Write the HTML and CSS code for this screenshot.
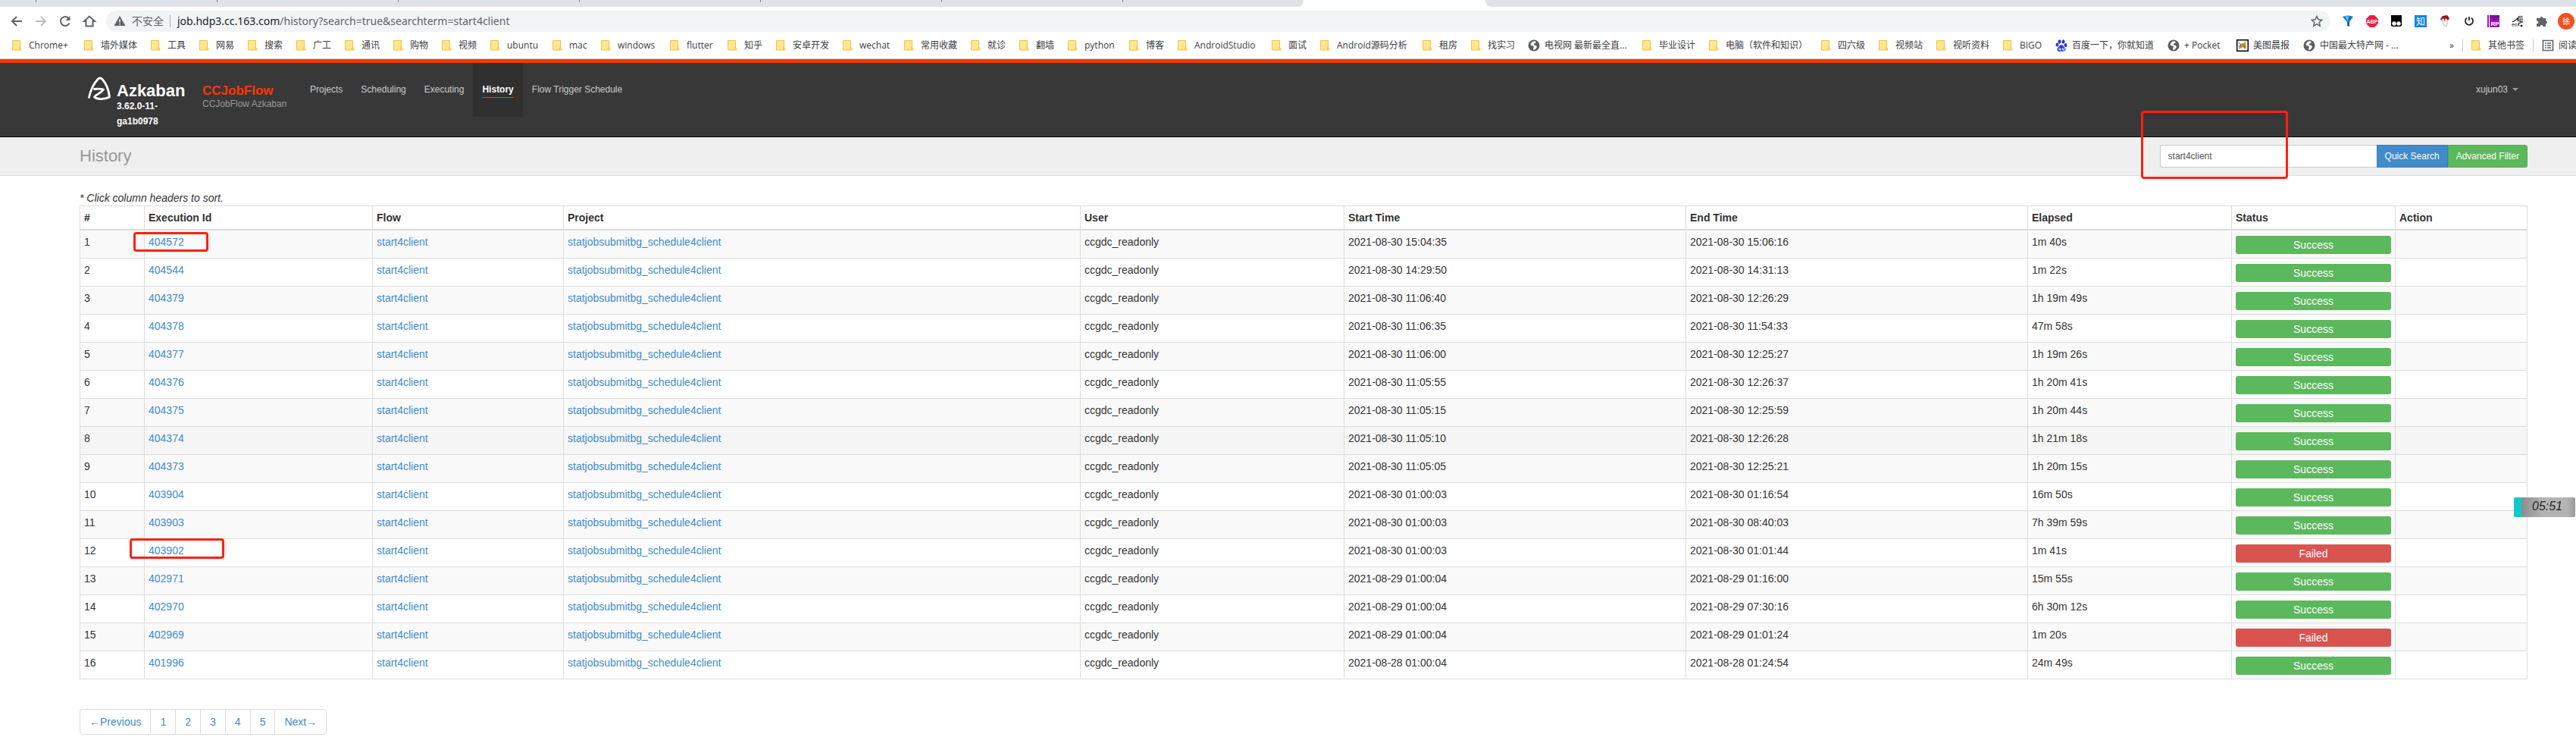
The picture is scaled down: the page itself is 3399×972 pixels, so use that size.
FILE: index.html
```html
<!DOCTYPE html>
<html lang="zh">
<head>
<meta charset="utf-8">
<title>Azkaban - History</title>
<link rel="stylesheet" href="styles.css">
</head>
<body>
<svg width="0" height="0" class="defs" aria-hidden="true">
  <symbol id="folder" viewBox="0 0 16 16"><path d="M.5 1.500h10v9.500q1.500 0 1.500 3h-11.500z" fill="#ffe694" stroke="#e8c53f"/><path d="M9.500 14v-3l1-1" fill="none" stroke="#e8c53f"/></symbol>
  <symbol id="globe" viewBox="0 0 16 16"><circle cx="8" cy="8" r="7.500" fill="#5a5d61"/><path d="M9 2L6 3 3.500 6l.5 2 3 .5 1 1.500-1 1.500.5 2.500 2.500-1 2-3-1-2-2.500-.5-1-1.500 2-1 1.500-1z" fill="#fff"/></symbol>
</svg>
<div class="tabs" aria-hidden="true">
  <div class="inactive left"><i></i><i></i><i></i><i></i><i></i><i></i><i></i></div><div class="active"></div><div class="inactive right"></div>
</div>
<div class="toolbar">
  <div class="nav-buttons">
    <button aria-label="后退"><svg viewBox="0 0 16 16"><path d="M15 8H2M8 2L2 8l6 6" fill="none" stroke="#5f6368" stroke-width="2"/></svg></button>
    <button aria-label="前进"><svg viewBox="0 0 16 16"><path d="M1 8h13M8 2l6 6-6 6" fill="none" stroke="#babcbe" stroke-width="2"/></svg></button>
    <button aria-label="刷新"><svg viewBox="0 0 16 16"><path d="M13.500 10.500A6 6 0 1 1 12.500 4" fill="none" stroke="#5f6368" stroke-width="2"/><path d="M14.500 1v6h-6z" fill="#5f6368"/></svg></button>
    <button aria-label="主页"><svg viewBox="0 0 16 16"><path d="M1 8l7-6.500L15 8h-2.500v6.500h-9V8z" fill="none" stroke="#5f6368" stroke-width="2"/></svg></button>
  </div>
  <div class="omnibox">
    <svg class="warn" viewBox="0 0 16 16"><path d="M8 1l7.500 13H.5z" fill="#5f6368"/><path d="M8 5.500v4M8 11v1.500" stroke="#fff" stroke-width="1.500"/></svg>
    <span class="insecure">不安全</span>
    <span class="url"><b>job.hdp3.cc.163.com</b>/history?search=true&amp;searchterm=start4client</span>
    <svg class="star" viewBox="0 0 16 16"><path d="M8 1.500l2 4.300 4.700.5-3.500 3.200 1 4.700L8 11.800l-4.200 2.400 1-4.700L1.300 6.300l4.700-.5z" fill="none" stroke="#5f6368" stroke-width="1.500"/></svg>
  </div>
  <div class="extensions">
    <svg viewBox="0 0 16 16"><path d="M1 2q7-3 14 0L10 9v6l-3-1V9z" fill="#1677c8"/><path d="M4 1.500h5L8 8z" fill="#6bc8f5"/><path d="M10 9v6l-1-1V9z" fill="#0b3d78"/></svg>
    <svg viewBox="0 0 16 16"><path d="M5 0h6l5 5v6l-5 5H5l-5-5V5z" fill="#ed1e45"/><text x="8" y="11" text-anchor="middle" class="abp">ABP</text></svg>
    <svg viewBox="0 0 16 16"><path d="M1 0h14v14l-2 1H3l-2-1z" fill="#050505"/><circle cx="5" cy="11" r="2.700" fill="#fff"/><circle cx="11" cy="11" r="2.700" fill="#fff"/></svg>
    <span class="zhi">知</span>
    <svg viewBox="0 0 16 16"><path d="M4 7l8 1-2 7-3-1z" fill="#eee" stroke="#ccc"/><path d="M2 5l3-4 6-1 3 4-2 3-3-3-1 4-2-4-3 3z" fill="#a8141c"/><path d="M6 1l1 3M11 2l1 3" stroke="#333"/></svg>
    <svg viewBox="0 0 16 16"><path d="M5 3.800a5 5 0 1 0 6 0M8 2v5" fill="none" stroke="#222" stroke-width="1.800"/></svg>
    <svg viewBox="0 0 16 16"><path d="M0 0h2v16H0zM3 0h13v16H3z" fill="#a017b4"/><path d="M3 0h13v3L9 8z" fill="#7a0b9e"/><text x="10" y="14" text-anchor="middle" class="rp">RP</text></svg>
    <svg viewBox="0 0 16 16"><path d="M1 9l5-3 3-3-1 4 6 2-5 2 1 3" fill="none" stroke="#222" stroke-width="1.200"/><text x="12" y="7" text-anchor="middle" class="tiny">英</text><text x="4" y="15" text-anchor="middle" class="tiny">en</text><circle cx="13" cy="14" r="1.500" fill="#222"/></svg>
    <svg viewBox="0 0 16 16"><path d="M1 4h4.500a2 2 0 1 1 4 0H13v3.500a2 2 0 1 1 0 4V15H9.500a1.900 1.900 0 1 0-3.800 0H1v-3.800a1.900 1.900 0 1 0 0-3.700z" fill="#5f6368"/></svg>
    <span class="avatar">徐</span>
  </div>
</div>
<nav class="bookmarks" id="bookmarks" aria-label="书签">
  <div class="marks" id="marks"></div>
  <div class="marks-end">
    <a href="#">»</a>
    <a href="#" class="divided"><svg viewBox="0 0 16 16"><use href="#folder"/></svg>其他书签</a>
    <a href="#" class="divided"><svg viewBox="0 0 16 16"><path d="M1.500 1.500h13v13h-13z" fill="none" stroke="#5f6368" stroke-width="1.600"/><path d="M4 5h2m1 0h5M4 8h2m1 0h5M4 11h2m1 0h5" stroke="#5f6368" stroke-width="1.400"/></svg>阅读</a>
  </div>
</nav>
<header class="site">
  <a class="brand" href="#">
    <svg viewBox="0 0 32 32"><path d="M2.500 27.500C4.500 18 9 9 14 3.500q3-3 6 0C25 9 28.500 18 29.500 27q-6 3-13 2.500-5-.5-7-2.500 1-2 5-4 5-3 7-6-5-1.500-12-.5" fill="none" stroke="#fff" stroke-width="2.800" stroke-linejoin="round" stroke-linecap="round"/></svg>
    <span><strong>Azkaban</strong><small>3.62.0-11-ga1b0978</small></span>
  </a>
  <div class="instance"><strong>CCJobFlow</strong><span>CCJobFlow Azkaban</span></div>
  <nav class="menu">
    <a href="#">Projects</a><a href="#">Scheduling</a><a href="#">Executing</a><a href="#" class="current"><span>History</span></a><a href="#">Flow Trigger Schedule</a>
  </nav>
  <button class="user">xujun03 <i></i></button>
</header>
<div class="title-bar">
  <h1>History</h1>
  <form class="search">
    <input type="text" value="start4client" aria-label="Search term"><button type="button" class="quick">Quick Search</button><button type="button" class="advanced">Advanced Filter</button>
    <div class="mark mark-search"></div>
  </form>
</div>
<main>
  <p class="hint">* Click column headers to sort.</p>
  <table>
    <colgroup><col class="c-num"><col class="c-id"><col class="c-flow"><col class="c-project"><col class="c-user"><col class="c-time"><col class="c-time"><col class="c-elapsed"><col class="c-status"><col class="c-action"></colgroup>
    <thead><tr><th>#</th><th>Execution Id</th><th>Flow</th><th>Project</th><th>User</th><th>Start Time</th><th>End Time</th><th>Elapsed</th><th>Status</th><th>Action</th></tr></thead>
    <tbody id="rows"></tbody>
  </table>
  <nav class="pages" aria-label="Pages"><a href="#">←Previous</a><a href="#">1</a><a href="#">2</a><a href="#">3</a><a href="#">4</a><a href="#">5</a><a href="#">Next→</a></nav>
</main>
<div class="timer">05:51</div>
<script src="script.js"></script>
</body>
</html>
```
FILE: styles.css
```css
* { box-sizing: border-box; }
body { margin: 0; background: #fff; color: #333; font: 14px/20px "Liberation Sans", "Noto Sans CJK SC", sans-serif; overflow: hidden; }
a { color: #428bca; text-decoration: none; }
button { font: inherit; border: 0; background: none; padding: 0; cursor: pointer; }
svg { display: block; flex: none; width: 16px; height: 16px; overflow: visible; }
.defs { position: absolute; width: 0; height: 0; }

.tabs { display: flex; height: 9px; background: #fff; }
.inactive { background: #dee1e6; }
.left { width: 1720px; border-bottom-right-radius: 8px; display: flex; gap: 238px; padding-left: 47px; }
.left i { width: 1px; height: 3px; background: #808388; }
.active { width: 240px; }
.right { flex: 1; border-bottom-left-radius: 8px; }

.toolbar { display: flex; align-items: center; height: 37px; padding: 0 2px 0 14px; font-family: "Noto Sans", "Noto Sans CJK SC", sans-serif; }
.nav-buttons { display: flex; gap: 16px; width: 126px; }
.omnibox { flex: 1; display: flex; align-items: center; height: 28px; border-radius: 14px; background: #f1f3f4; padding: 0 10px; color: #5f6368; }
.insecure { padding: 0 8px; border-right: 1px solid #aaadb1; line-height: 16px; }
.url { flex: 1; padding-left: 9px; }
.url b { font-weight: 400; color: #202124; }
.extensions { display: flex; align-items: center; gap: 16px; padding-left: 15px; }
.extensions svg:last-of-type { margin-right: -3px; }
.avatar { width: 22px; height: 22px; border-radius: 11px; background: #f4511e; color: #fff; font-size: 10px; line-height: 22px; text-align: center; }
.abp { font: bold 7px "Liberation Sans", sans-serif; fill: #fff; }
.zhi { width: 16px; height: 16px; background: #0d84e8; color: #fff; font: 12px/16px "Noto Sans CJK SC", sans-serif; text-align: center; }
.rp { font: bold 8px "Liberation Sans", sans-serif; fill: #fff; }
.tiny { font: 7px "Noto Sans CJK SC", sans-serif; fill: #222; }

.bookmarks { display: flex; justify-content: space-between; height: 32px; padding-left: 16px; border-bottom: 1px solid #d0d3d8; font: 12px/27px "Open Sans", "Noto Sans CJK SC", sans-serif; white-space: nowrap; overflow: hidden; }
.bookmarks a { display: flex; align-items: center; gap: 6px; height: 27px; color: #3c4043; }
.marks { display: grid; grid-template-columns: 95px 88px repeat(7, 64px) 82px 64px 91px 76px 64px 88px 81px 88px 64px 64px 81px 64px 124px 64px 135px 64px 75px 151px 88px 148px 76px 76px 88px 69px 148px 91px 88px 140px; }
.marks-end { display: flex; align-items: center; height: 27px; width: 167px; gap: 11px; }
.marks-end a.divided { height: 16px; border-left: 1px solid #c8cacd; padding-left: 11px; }

.site { display: flex; align-items: flex-start; min-height: 103px; padding: 0 64px 0 115px; background: #383838; border-top: 5px solid #ff3601; border-bottom: 1px solid #000; font-size: 12px; }
.brand { display: flex; gap: 7px; width: 152px; padding-top: 18px; color: #fff; }
.brand svg { width: 32px; height: 32px; }
.brand > span { width: 90px; padding-top: 9px; }
.brand strong { display: block; font-size: 22px; line-height: 20px; }
.brand small { display: block; width: 70px; font-size: 12px; font-weight: 700; }
.instance { width: 130px; padding-top: 28px; white-space: nowrap; }
.instance strong { display: block; font-size: 17px; line-height: 18px; color: #ff3601; }
.instance span { display: block; line-height: 16px; color: #999; }
.menu { display: flex; }
.menu a { height: 71px; padding: 25px 12px 0; color: #ccc; }
.menu .current { background: #303030; color: #fff; font-weight: 700; }
.current span { display: block; border-bottom: 1px solid #ff3601; }
.user { display: flex; align-items: center; gap: 6px; margin: 25px 12px 0 auto; color: #ccc; line-height: 20px; }
.user i { border: 4px solid transparent; border-top-color: #999; border-bottom: 0; }

.title-bar { display: flex; align-items: center; justify-content: space-between; height: 51px; padding: 0 64px 0 105px; background: #efefef; border-bottom: 1px solid #dcdcdc; }
h1 { margin: 0; font-size: 22px; font-weight: 400; color: #999; }
.search { position: relative; display: flex; font-size: 12px; }
.search input { width: 286px; height: 30px; padding: 5px 10px; border: 1px solid #ccc; border-right: 0; border-radius: 3px 0 0 3px; background: #fff; color: #555; font: inherit; }
.search button { height: 30px; padding: 0 10px; color: #fff; }
.quick { background: #428bca; border: 1px solid #357ebd; }
.advanced { background: #5cb85c; border: 1px solid #4cae4c; border-radius: 0 3px 3px 0; }
.mark { position: absolute; border: 3px solid #ff2010; border-radius: 4px; pointer-events: none; }
.mark-search { left: -25px; top: -45px; width: 194px; height: 90px; }

main { padding: 19px 64px 0 105px; }
.hint { margin: 0; font-style: italic; }
table { width: 100%; table-layout: fixed; border-collapse: collapse; border: 1px solid #ddd; }
th, td { padding: 5px; border: 1px solid #ddd; text-align: left; vertical-align: top; }
th { border-bottom-width: 2px; }
td { height: 37px; position: relative; }
tbody tr:nth-child(odd) { background: #f9f9f9; }
tbody tr.hover { background: #f5f5f5; }
.c-num { width: 85px; } .c-id { width: 301px; } .c-flow { width: 252px; } .c-project { width: 682px; } .c-user { width: 348px; }
.c-time { width: 451px; } .c-elapsed { width: 269px; } .c-status { width: 216px; }
.status { margin-top: 2px; height: 24px; border-radius: 3px; background: #5cb85c; color: #fff; text-align: center; line-height: 24px; }
.failed { background: #d9534f; }
.mark-first { left: -15px; top: 2px; width: 99px; height: 26px; }
.mark-failed { left: -20px; top: -1px; width: 125px; height: 27px; }
.pages { display: flex; width: max-content; margin-top: 39px; border: 1px solid #ddd; border-radius: 4px; }
.pages a { padding: 6px 12px; border-right: 1px solid #ddd; }
.pages a:last-child { border: 0; }

.timer { position: fixed; right: 1px; top: 656px; width: 81px; height: 26px; padding-left: 14px; border-left: 10px solid #12c8c8; border-radius: 2px; background: linear-gradient(90deg, #8c8c8c, #b4b4b4 40%, #b4b4b4 85%, #999); color: #222; font: italic 16px/24px "Liberation Sans", sans-serif; }
```
FILE: script.js
```js
const marks = ["Chrome+","墙外媒体","工具","网易","搜索","广工","通讯","购物","视频","ubuntu","mac","windows","flutter","知乎","安卓开发","wechat","常用收藏","就诊","翻墙","python","博客","AndroidStudio","面试","Android源码分析","租房","找实习","@电视网 最新最全直...","毕业设计","电脑（软件和知识）","四六级","视频站","视听资料","BIGO","*百度一下，你就知道","@+ Pocket","#美图晨报","@中国最大特产网 - ..."];
const icons = {
  "@": '<use href="#globe"/>',
  "*": '<g fill="#2932e1"><ellipse cx="2.500" cy="7" rx="2" ry="2.500"/><ellipse cx="5.500" cy="3" rx="2" ry="2.700"/><ellipse cx="10.500" cy="3" rx="2" ry="2.700"/><ellipse cx="13.500" cy="7.500" rx="2" ry="2.500"/><path d="M8 7q2 0 3.500 3 3 2 1.500 4.500-2 2-5 1-3 1-5-.5-1.500-3 1.500-5Q6 7 8 7z"/></g><path d="M5 12h2v2H5zM9.500 11v3h2v-3" fill="none" stroke="#fff"/>',
  "#": '<path d="M.7.700h14.600v14.600H.7z" fill="#fff" stroke="#000" stroke-width="1.500"/><path d="M3 13l2-7 4-1 4-3-1 4 1 3-3 4-1-3z" fill="#c09030"/><path d="M3 4l3 3-3 3M9 8l4 4" stroke="#555" fill="none"/>'
};
document.getElementById("marks").innerHTML = marks.map(m => {
  const icon = icons[m[0]];
  return `<a href="#"><svg viewBox="0 0 16 16">${icon || '<use href="#folder"/>'}</svg>${icon ? m.slice(1) : m}</a>`;
}).join("");

const rows = [
  ["404572","30 15:04:35","30 15:06:16","1m 40s"],
  ["404544","30 14:29:50","30 14:31:13","1m 22s"],
  ["404379","30 11:06:40","30 12:26:29","1h 19m 49s"],
  ["404378","30 11:06:35","30 11:54:33","47m 58s"],
  ["404377","30 11:06:00","30 12:25:27","1h 19m 26s"],
  ["404376","30 11:05:55","30 12:26:37","1h 20m 41s"],
  ["404375","30 11:05:15","30 12:25:59","1h 20m 44s"],
  ["404374","30 11:05:10","30 12:26:28","1h 21m 18s"],
  ["404373","30 11:05:05","30 12:25:21","1h 20m 15s"],
  ["403904","30 01:00:03","30 01:16:54","16m 50s"],
  ["403903","30 01:00:03","30 08:40:03","7h 39m 59s"],
  ["403902","30 01:00:03","30 01:01:44","1m 41s"],
  ["402971","29 01:00:04","29 01:16:00","15m 55s"],
  ["402970","29 01:00:04","29 07:30:16","6h 30m 12s"],
  ["402969","29 01:00:04","29 01:01:24","1m 20s"],
  ["401996","28 01:00:04","28 01:24:54","24m 49s"]
];
const failed = ["403902", "402969"];
const boxes = { "404572": "mark-first", "403902": "mark-failed" };
document.getElementById("rows").innerHTML = rows.map(([id, start, end, elapsed], i) => {
  const bad = failed.includes(id);
  const box = boxes[id] ? `<div class="mark ${boxes[id]}"></div>` : "";
  return `<tr${id === "404374" ? ' class="hover"' : ""}><td>${i + 1}</td><td><a href="#">${id}</a>${box}</td><td><a href="#">start4client</a></td><td><a href="#">statjobsubmitbg_schedule4client</a></td><td>ccgdc_readonly</td><td>2021-08-${start}</td><td>2021-08-${end}</td><td>${elapsed}</td><td><div class="status${bad ? " failed" : ""}">${bad ? "Failed" : "Success"}</div></td><td></td></tr>`;
}).join("");
```
